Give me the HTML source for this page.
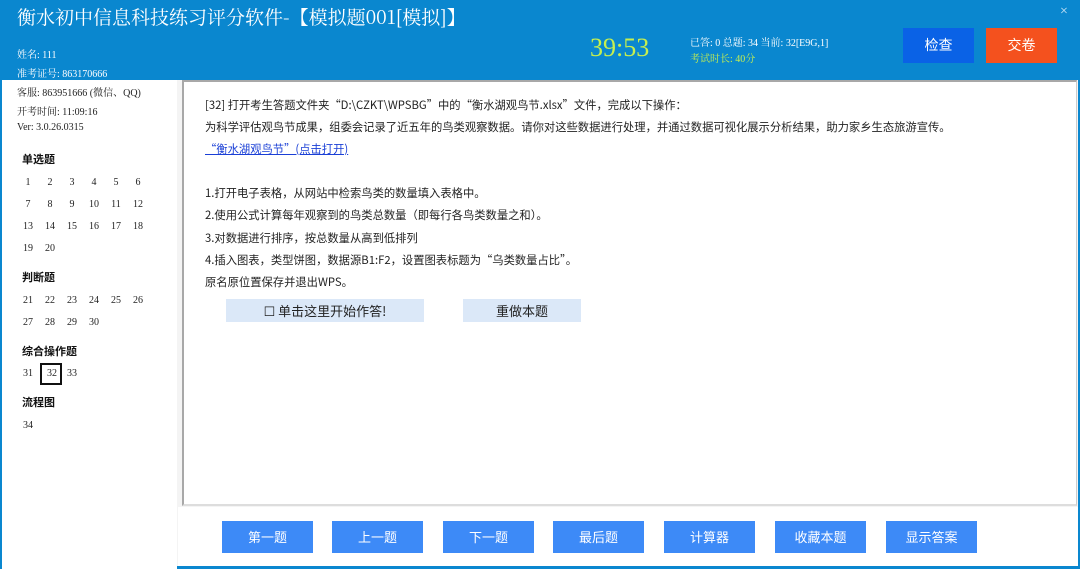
<!DOCTYPE html>
<html><head><meta charset="utf-8"><style>
*{margin:0;padding:0;box-sizing:border-box}
body{width:1080px;height:569px;overflow:hidden;background:#0a87cf;font-family:"Liberation Serif","Noto Serif CJK SC","Noto Sans CJK SC",serif;position:relative}
.a{position:absolute;white-space:nowrap}
.h{color:#fff;font-size:10px}
.wbg{position:absolute;left:2px;top:80px;width:1076px;height:486px;background:#f4f4f4}
.side{position:absolute;left:2px;top:80px;width:175px;height:489px;background:#fff}
.s{font-size:10px;color:#222}
.b{font-weight:bold;font-size:11px;font-family:"Noto Sans CJK SC",sans-serif;color:#111}
.n{font-size:10px;color:#222;width:22px;text-align:center;margin-left:-5px}
.main{position:absolute;left:182px;top:80px;width:895px;height:426px;background:#fff;border:2px solid #a8a8a8;border-right:1px solid #ccc;border-bottom:2px solid #ddd}
.t{font-size:11.3px;color:#222;font-family:"Noto Sans CJK SC",sans-serif}
.bot{position:absolute;left:178px;top:507px;width:900px;height:59px;background:#fff}
.btn{position:absolute;top:521px;width:91px;height:32px;background:#3d8af7;color:#fff;font-size:13px;text-align:center;line-height:32px;font-family:"Noto Sans CJK SC",sans-serif}
</style></head><body>
<div class="a" style="left:17px;top:3px;font-size:19px;color:#fff;font-family:'Noto Serif CJK SC',serif">衡水初中信息科技练习评分软件-【模拟题001[模拟]】</div>
<div class="a" style="left:1060px;top:4px;color:#cfe6f6;font-size:14px">×</div>
<div class="a h" style="left:17px;top:46px">姓名: 111</div>
<div class="a h" style="left:17px;top:65px">准考证号: 863170666</div>
<div class="a" style="left:590px;top:33px;font-size:26px;color:#c6ef4f">39:53</div>
<div class="a h" style="left:690px;top:34px">已答: 0 总题: 34 当前: 32[E9G,1]</div>
<div class="a h" style="left:690px;top:50px;color:#c6ef4f">考试时长: 40分</div>
<div class="a" style="left:903px;top:28px;width:71px;height:35px;background:#0a62e6;color:#fff;font-size:14px;text-align:center;line-height:35px;font-family:'Noto Sans CJK SC',sans-serif">检查</div>
<div class="a" style="left:986px;top:28px;width:71px;height:35px;background:#f4511e;color:#fff;font-size:14px;text-align:center;line-height:35px;font-family:'Noto Sans CJK SC',sans-serif">交卷</div>
<div class="wbg"></div>
<div class="side"></div>
<div class="a s" style="left:17px;top:84px">客服: 863951666 (微信、QQ)</div>
<div class="a s" style="left:17px;top:103px">开考时间: 11:09:16</div>
<div class="a s" style="left:17px;top:122px">Ver: 3.0.26.0315</div>
<div class="a b" style="left:22px;top:151px">单选题</div>
<div class="a b" style="left:22px;top:269px">判断题</div>
<div class="a b" style="left:22px;top:343px">综合操作题</div>
<div class="a b" style="left:22px;top:394px">流程图</div>
<div class="a" style="left:40px;top:363px;width:22px;height:22px;border:2px solid #111"></div>
<div class="main"></div>
<div class="a t" style="left:205px;top:97px">[32] 打开考生答题文件夹“D:\CZKT\WPSBG”中的“衡水湖观鸟节.xlsx”文件，完成以下操作：</div>
<div class="a t" style="left:205px;top:119px">为科学评估观鸟节成果，组委会记录了近五年的鸟类观察数据。请你对这些数据进行处理，并通过数据可视化展示分析结果，助力家乡生态旅游宣传。</div>
<div class="a t" style="left:205px;top:141px;color:#1a3fd6;text-decoration:underline">“衡水湖观鸟节”(点击打开)</div>
<div class="a t" style="left:205px;top:185px">1.打开电子表格，从网站中检索鸟类的数量填入表格中。</div>
<div class="a t" style="left:205px;top:207px">2.使用公式计算每年观察到的鸟类总数量（即每行各鸟类数量之和）。</div>
<div class="a t" style="left:205px;top:230px">3.对数据进行排序，按总数量从高到低排列</div>
<div class="a t" style="left:205px;top:252px">4.插入图表，类型饼图，数据源B1:F2，设置图表标题为“乌类数量占比”。</div>
<div class="a t" style="left:205px;top:274px">原名原位置保存并退出WPS。</div>
<div class="a t" style="left:226px;top:299px;width:198px;height:23px;background:#dbe8f8;font-size:13px;text-align:center;line-height:23px">☐ 单击这里开始作答!</div>
<div class="a t" style="left:463px;top:299px;width:118px;height:23px;background:#dbe8f8;font-size:13px;text-align:center;line-height:23px">重做本题</div>
<div class="bot"></div>
<div class="btn" style="left:222px">第一题</div>
<div class="btn" style="left:332px">上一题</div>
<div class="btn" style="left:443px">下一题</div>
<div class="btn" style="left:553px">最后题</div>
<div class="btn" style="left:664px">计算器</div>
<div class="btn" style="left:775px">收藏本题</div>
<div class="btn" style="left:886px">显示答案</div>
<div class="a n" style="left:22px;top:177px">1</div><div class="a n" style="left:44px;top:177px">2</div><div class="a n" style="left:66px;top:177px">3</div><div class="a n" style="left:88px;top:177px">4</div><div class="a n" style="left:110px;top:177px">5</div><div class="a n" style="left:132px;top:177px">6</div>
<div class="a n" style="left:22px;top:199px">7</div><div class="a n" style="left:44px;top:199px">8</div><div class="a n" style="left:66px;top:199px">9</div><div class="a n" style="left:88px;top:199px">10</div><div class="a n" style="left:110px;top:199px">11</div><div class="a n" style="left:132px;top:199px">12</div>
<div class="a n" style="left:22px;top:221px">13</div><div class="a n" style="left:44px;top:221px">14</div><div class="a n" style="left:66px;top:221px">15</div><div class="a n" style="left:88px;top:221px">16</div><div class="a n" style="left:110px;top:221px">17</div><div class="a n" style="left:132px;top:221px">18</div>
<div class="a n" style="left:22px;top:243px">19</div><div class="a n" style="left:44px;top:243px">20</div>
<div class="a n" style="left:22px;top:295px">21</div><div class="a n" style="left:44px;top:295px">22</div><div class="a n" style="left:66px;top:295px">23</div><div class="a n" style="left:88px;top:295px">24</div><div class="a n" style="left:110px;top:295px">25</div><div class="a n" style="left:132px;top:295px">26</div>
<div class="a n" style="left:22px;top:317px">27</div><div class="a n" style="left:44px;top:317px">28</div><div class="a n" style="left:66px;top:317px">29</div><div class="a n" style="left:88px;top:317px">30</div>
<div class="a n" style="left:22px;top:368px">31</div><div class="a n" style="left:46px;top:368px">32</div><div class="a n" style="left:66px;top:368px">33</div>
<div class="a n" style="left:22px;top:420px">34</div>
</body></html>
